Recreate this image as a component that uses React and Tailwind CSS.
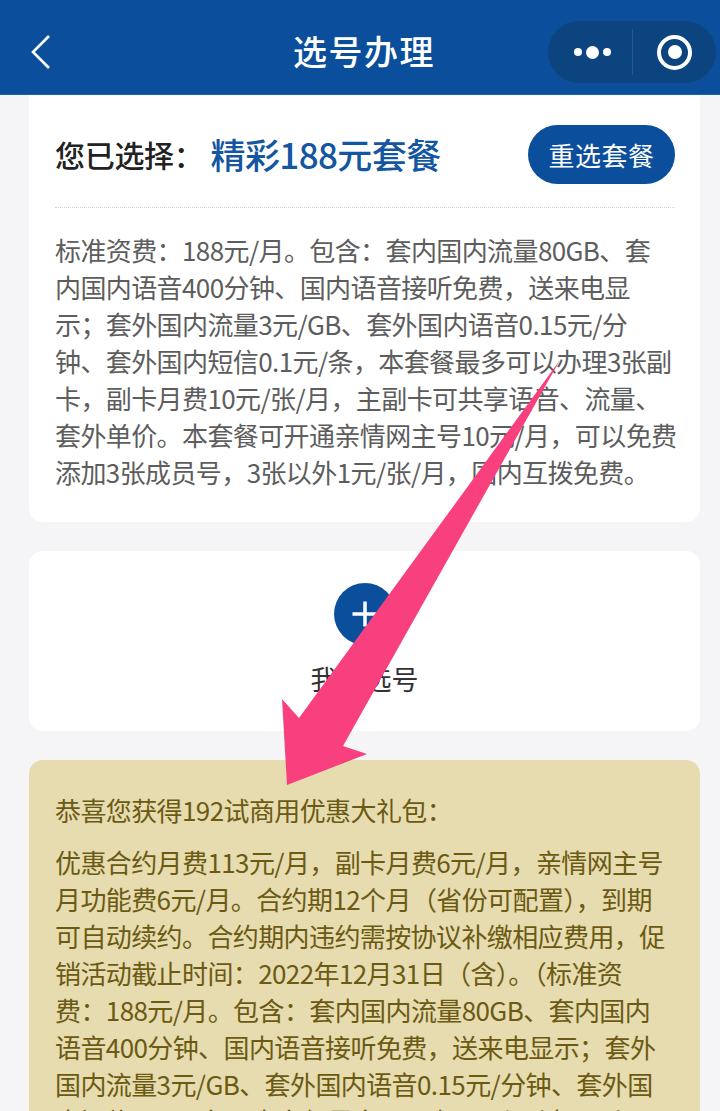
const font = { fontFamily: '"Noto Sans CJK SC", "Liberation Sans", sans-serif' };

const planLines = [
  '标准资费：188元/月。包含：套内国内流量80GB、套',
  '内国内语音400分钟、国内语音接听免费，送来电显',
  '示；套外国内流量3元/GB、套外国内语音0.15元/分',
  '钟、套外国内短信0.1元/条，本套餐最多可以办理3张副',
  '卡，副卡月费10元/张/月，主副卡可共享语音、流量、',
  '套外单价。本套餐可开通亲情网主号10元/月，可以免费',
  '添加3张成员号，3张以外1元/张/月，国内互拨免费。',
];

const giftLines = [
  '优惠合约月费113元/月，副卡月费6元/月，亲情网主号',
  '月功能费6元/月。合约期12个月（省份可配置），到期',
  '可自动续约。合约期内违约需按协议补缴相应费用，促',
  '销活动截止时间：2022年12月31日（含）。（标准资',
  '费：188元/月。包含：套内国内流量80GB、套内国内',
  '语音400分钟、国内语音接听免费，送来电显示；套外',
  '国内流量3元/GB、套外国内语音0.15元/分钟、套外国',
  '内短信0.1元/条，本套餐最多可以办理3张副卡，副',
];

function Lines({ items }) {
  return items.map((line) => (
    <div key={line} className="h-[37px] whitespace-nowrap leading-[37px] tracking-[-0.6px]">
      {line}
    </div>
  ));
}

function Header() {
  return (
    <div className="relative flex h-[95px] shrink-0 items-center justify-center border-b border-[#1b62ad] bg-[#0b4f9c]">
      <svg className="absolute left-[30px] top-[34px]" width="22" height="36" viewBox="0 0 22 36" fill="none">
        <path d="M19 2 3 18l16 16" stroke="#fff" strokeWidth="2.6" />
      </svg>
      <span className="ml-[8px] mt-[6px] text-[34px] font-medium tracking-[1.5px] text-white">选号办理</span>
      <div className="absolute left-[548px] top-[21px] flex h-[62px] w-[168px] items-center rounded-full bg-[#0c447f]">
        <div className="flex w-[84px] items-center justify-center gap-[4px] pl-[4px]">
          <span className="h-[8px] w-[8px] rounded-full bg-white" />
          <span className="h-[13px] w-[13px] rounded-full bg-white" />
          <span className="h-[8px] w-[8px] rounded-full bg-white" />
        </div>
        <div className="h-[46px] w-px bg-[#1d5a99]" />
        <div className="flex flex-1 items-center justify-center">
          <div className="flex h-[35px] w-[35px] items-center justify-center rounded-full border-[4px] border-white">
            <span className="h-[14px] w-[14px] rounded-full bg-white" />
          </div>
        </div>
      </div>
    </div>
  );
}

function Arrow() {
  return (
    <svg className="pointer-events-none absolute left-0 top-0" width="720" height="1111" viewBox="0 0 720 1111">
      <polygon points="560,360 299,718 282,699 287,785 367,754 343,746" fill="#f8407f" />
    </svg>
  );
}

export default function App() {
  return (
    <div className="relative h-[1111px] w-[720px] overflow-hidden bg-[#f5f5f7]" style={font}>
      <Header />
      <div className="flex flex-col gap-[29px] pl-[29px] pr-[20px]">
        <div className="h-[427px] rounded-b-[14px] bg-white pl-[26px] pr-[25px]">
          <div className="flex h-[113px] items-center justify-between border-b border-dotted border-[#d4d4d4] pt-[6px]">
            <div className="flex items-center">
              <span className="text-[30px] font-medium tracking-[-0.3px] text-[#222]">您已选择：</span>
              <span className="ml-[7px] text-[35px] font-medium tracking-[-0.6px] text-[#14569f]">精彩188元套餐</span>
            </div>
            <div className="flex h-[59px] w-[147px] items-center justify-center rounded-full bg-[#0b4f9c] text-[26px] tracking-[0.5px] text-white">
              重选套餐
            </div>
          </div>
          <div className="pt-[23px] text-[26px] text-[#5d5d5d]">
            <Lines items={planLines} />
          </div>
        </div>

        <div className="flex h-[180px] flex-col items-center rounded-[14px] bg-white pt-[32px]">
          <div className="flex h-[62px] w-[62px] items-center justify-center rounded-full bg-[#0b4f9c]">
            <svg width="30" height="30" viewBox="0 0 30 30">
              <path d="M15 2.5v25M2.5 15h25" stroke="#fff" strokeWidth="3.5" />
            </svg>
          </div>
          <div className="mt-[14px] text-[27px] leading-[40px] text-[#333]">我要选号</div>
        </div>

        <div className="h-[400px] rounded-[14px] bg-[#e6dcb0] px-[26px] pt-[31px] text-[26px] text-[#6b5a12]">
          <div className="h-[37px] whitespace-nowrap leading-[37px] tracking-[-0.6px]">恭喜您获得192试商用优惠大礼包：</div>
          <div className="mt-[15px]">
            <Lines items={giftLines} />
          </div>
        </div>
      </div>
      <Arrow />
    </div>
  );
}
